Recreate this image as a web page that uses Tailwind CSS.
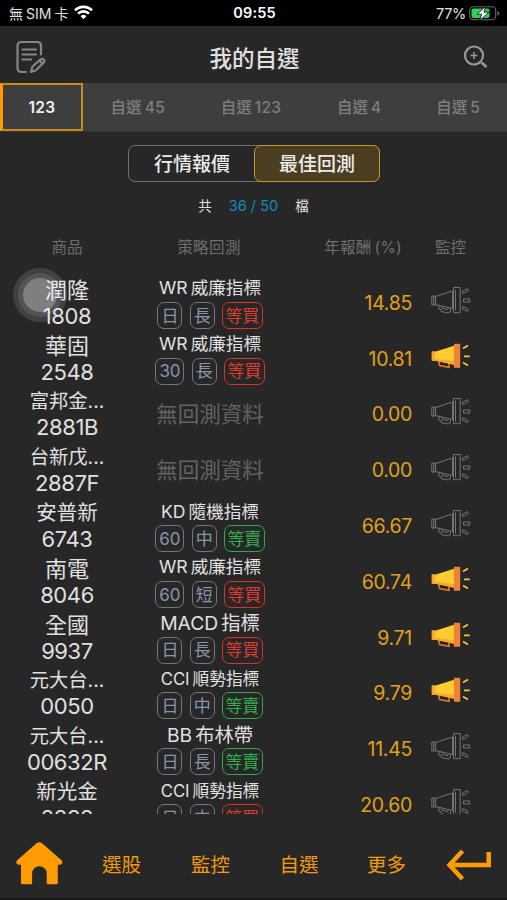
<!DOCTYPE html>
<html lang="zh-Hant">
<head>
    <meta charset="UTF-8">
    <meta name="viewport" content="width=device-width, initial-scale=1.0">
    <title>我的自選</title>
    <script src="https://cdn.jsdelivr.net/npm/@tailwindcss/browser@4"></script>
</head>
<body class="bg-[#272727] text-[#e0e0e0] font-['Inter','Noto_Sans_CJK_TC',sans-serif]">
    <div class="relative flex flex-col w-[507px] h-[900px] overflow-hidden border-b-2 border-[#1a1a1a]">

        <!-- Status bar -->
        <div class="grid grid-cols-3 items-center h-[26px] shrink-0 bg-black pl-[9px] pr-[7px] pt-px text-[14px] leading-none">
            <div class="flex items-center gap-[6px]">
                <span class="whitespace-nowrap">無<span class="mx-[3px]">SIM</span>卡</span>
                <svg class="w-[19px] h-[15px] -mt-0.5" viewBox="0 0 19 15" fill="none" stroke="#fff" stroke-width="2.6">
                    <path d="M1 5.4a12 12 0 0 1 17 0M4 8.6a7.8 7.8 0 0 1 11 0"/>
                    <path d="M9.500 14.300l-2.900-3a4.100 4.100 0 0 1 5.800 0z" fill="#fff" stroke="none"/>
                </svg>
            </div>
            <div class="text-center font-semibold text-[14.500px] text-white tracking-[0.2px]">09:55</div>
            <div class="flex items-center justify-end gap-[3px]">
                <span class="text-[14.500px] tracking-[-0.3px] pt-px">77%</span>
                <svg class="w-[31px] h-[15px]" viewBox="0 0 31 15">
                    <rect x=".7" y=".8" width="26" height="13" rx="3.800" fill="none" stroke="#6b6b6b" stroke-width="1.100"/>
                    <rect x="2.500" y="2.600" width="18" height="9.400" rx="2" fill="#2fd158"/>
                    <path d="M28.500 5v4.600q1.700-.7 1.700-2.300T28.500 5z" fill="#777"/>
                    <path d="M16.800.3L8 8.200h4.600L10.500 14.700l9.500-8.500H15z" fill="#fff" stroke="#000" stroke-width=".8"/>
                </svg>
            </div>
        </div>

        <!-- Header -->
        <div class="flex items-center justify-between h-[57px] shrink-0 pl-[16px] pr-[19px]">
            <svg class="w-[30px] h-[34px] mt-1" viewBox="0 0 30 34" fill="none" stroke="#858585" stroke-width="2.200" stroke-linecap="round">
                <path d="M10 32H5.500Q1.500 32 1.500 28V6Q1.500 2 5.500 2H21q4 0 4 4v8.500"/>
                <path d="M6.500 9.500H20M6.500 14.500H20M6.500 19.500H15"/>
                <path d="M15 32l1.500-5.500 8.300-7.300q1.500-.9 2.800.4t.3 2.700L20 30.300zM23.500 20.500l3.300 3.300" stroke-linejoin="round"/>
            </svg>
            <h1 class="text-[22.500px] font-medium mt-[9px]">我的自選</h1>
            <svg class="w-[25px] h-[23px] mt-1" viewBox="0 0 25 23" fill="none" stroke="#999">
                <circle cx="11" cy="10.500" r="9" stroke-width="2.200"/>
                <path d="M11 7v7M7.500 10.500h7" stroke-width="1.500"/>
                <path d="M18.500 17.500l5 4.500" stroke-width="2.600"/>
            </svg>
        </div>

        <!-- Group tabs -->
        <div class="flex h-[49px] shrink-0 bg-[#3e3e3e] border-b border-[#333] text-[15.500px] font-medium text-[#7d7d7d] *:flex *:items-center *:justify-center *:gap-[3px] *:pt-0.5">
            <div class="w-[83px] border-2 border-l-[3px] border-[#c98a1b] border-l-[#ff9a00] text-[#f0f0f0] font-semibold tracking-[0.3px]">123</div>
            <div class="w-[110px]"><span>自選</span><span class="tracking-[0.5px]">45</span></div>
            <div class="w-[116px]"><span>自選</span><span class="tracking-[0.3px]">123</span></div>
            <div class="w-[100px]"><span>自選</span><span>4</span></div>
            <div class="w-[98px]"><span>自選</span><span>5</span></div>
        </div>

        <!-- Mode switch -->
        <div class="flex shrink-0 w-[252px] h-[37px] mt-[13px] ml-[128px] text-[19px] font-medium text-[#ececec] rounded-[7px] border border-[#707070]">
            <div class="flex-1 flex items-center justify-center pt-[3px]">行情報價</div>
            <div class="w-[126px] -m-px flex items-center justify-center pt-[3px] rounded-[7px] border-[1.500px] border-[#c3962e] bg-[#4b3e20]">最佳回測</div>
        </div>

        <div class="flex items-center justify-center h-5 shrink-0 mt-[14px] gap-[17px] text-[13.500px]">
            <span>共</span><span class="text-[14.500px] text-[#128bc0]">36 / 50</span><span>檔</span>
        </div>

        <!-- Column titles -->
        <div class="flex items-center h-6 shrink-0 mt-5 text-[15.500px] text-[#6e6e6e]">
            <div class="w-[134px] text-center">商品</div>
            <div class="w-[150px] text-center tracking-[0.4px]">策略回測</div>
            <div class="w-[118px] text-right tracking-[0.3px]">年報酬<span class="ml-[3px]">(%)</span></div>
            <div class="w-[97px] text-center">監控</div>
        </div>

        <!-- Stock list -->
        <div id="list" class="h-[540px] shrink-0 mt-[14px] overflow-hidden"></div>

        <!-- Bottom navigation -->
        <div class="flex items-center flex-1 pt-[14px] text-[19.500px] text-[#f29a0c]">
            <svg class="w-[47px] h-[43px] ml-[16px]" viewBox="0 0 47 43" fill="#ff9c05">
                <path d="M20.500 1.200q2.800-2 5.600 0L45.800 18.500q1.700 3.700-1.800 4.300h-2.200V41q0 1.300-1.300 1.300H32q-1.300 0-1.300-1.300V31.500a7.300 7.300 0 0 0-14.600 0V41q0 1.300-1.300 1.300H6.300Q5 42.300 5 41V22.800H2.600Q-.9 22 .9 18.500z"/>
            </svg>
            <div class="w-[89px] ml-[14px] pt-1.5 text-center">選股</div>
            <div class="w-[89px] pt-1.5 text-center">監控</div>
            <div class="w-[88px] pt-1.5 text-center">自選</div>
            <div class="w-[87px] pt-1.5 text-center">更多</div>
            <svg class="w-[46px] h-[32px] ml-[16px] mt-1" viewBox="0 0 46 32" fill="none" stroke="#ff9c05" stroke-width="4.500">
                <path d="M16.500 2L3.500 16l13 14M4 16h38.700V3"/>
            </svg>
        </div>

        <!-- Floating touch button -->
        <div class="absolute left-[13px] top-[268px] size-[54px] rounded-full bg-white/12 flex items-center justify-center">
            <div class="size-[44px] rounded-full bg-white/10 flex items-center justify-center">
                <div class="size-[34px] rounded-full bg-white/25"></div>
            </div>
        </div>
    </div>

    <script>
        const BIG = 'text-[22px]', MID = 'text-[20.500px]', SMALL = 'text-[19.300px]';
        const S1 = 'text-[16.700px]', S2 = 'text-[17.600px]', S3 = 'text-[19.300px]';

        // name, size, code, [latin, chinese, size], [period, term, signal], rate, alert on
        const stocks = [
            ['潤隆', BIG, '1808', ['WR', '威廉指標', S2], ['日', '長', '等買'], '14.85', false],
            ['華固', BIG, '2548', ['WR', '威廉指標', S2], ['30', '長', '等買'], '10.81', true],
            ['富邦金...', SMALL, '2881B', null, null, '0.00', false],
            ['台新戊...', SMALL, '2887F', null, null, '0.00', false],
            ['安普新', MID, '6743', ['KD', '隨機指標', S2], ['60', '中', '等賣'], '66.67', false],
            ['南電', BIG, '8046', ['WR', '威廉指標', S2], ['60', '短', '等買'], '60.74', true],
            ['全國', BIG, '9937', ['MACD', '指標', S3], ['日', '長', '等買'], '9.71', true],
            ['元大台...', SMALL, '0050', ['CCI', '順勢指標', S1], ['日', '中', '等賣'], '9.79', true],
            ['元大台...', SMALL, '00632R', ['BB', '布林帶', S3], ['日', '長', '等賣'], '11.45', false],
            ['新光金', MID, '2888', ['CCI', '順勢指標', S1], ['日', '中', '等買'], '20.60', false]
        ];

        const hornOff = `
            <svg class="w-[40px] h-[28px]" viewBox="0 0 40 28" fill="none" stroke="#747474" stroke-width="1">
                <path d="M.8 10h3.700v9H.8zM4.500 10.500L21.500 5v17.500L4.500 18.500zM2.700 10v9"/>
                <path d="M22.500 1.500h6.700v25.200h-6.700zM24.500 3.500v21"/>
                <path d="M7.500 19.300l.7 4 2 .3v2l7 1.400 2-1 .3-3.500M10.500 20l.6 2.300 5.500 1.300.7-1.800"/>
                <path d="M31 5.700l5.300-3.200 1 2-5.300 3.200zM32.500 13h6v3h-6zM32 20.500l5.300 3-1 2-5.300-3z"/>
            </svg>`;
        const hornOn = `
            <svg class="w-[40px] h-[28px]" viewBox="0 0 40 28">
                <path d="M7.500 18.500l1 5 9.500 1.800V21" fill="none" stroke="#e07828" stroke-width="1.600"/>
                <path d="M.8 9.500h4L23 3.800v18.900l-18.200-4h-4z" fill="#fccb2f"/>
                <path d="M4.800 17L23 19v3.700l-18.200-4z" fill="#f6a82b"/>
                <path d="M.8 9.500h3.200v9.200H.8z" fill="#f9a633"/>
                <path d="M23 1.800h6.200v24H23z" fill="#ee8338"/>
                <path d="M32 6.500l5-3M33 14.300h5.800M32 20.500l5 3" stroke="#fbc34a" stroke-width="1.700"/>
            </svg>`;

        function tag(text) {
            return `<span class="h-[27px] px-[3px] pt-0.5 flex items-center rounded-[7px] border border-[#73777b] text-[#8795ab]">${text}</span>`;
        }

        function signal(text) {
            const color = text === '等買' ? 'border-[#d5352b] text-[#e03a2f]' : 'border-[#2fa84a] text-[#31b14e]';
            return `<span class="h-[27px] px-[2.500px] pt-0.5 flex items-center rounded-[7px] border-[1.500px] ${color}">${text}</span>`;
        }

        document.getElementById('list').innerHTML = stocks.map(([name, size, code, strategy, tags, rate, on]) => `
            <div class="flex items-center h-[55.800px]">
                <div class="w-[134px] flex flex-col items-center">
                    <div class="h-[28px] leading-[30px] ${size}">${name}</div>
                    <div class="h-[26px] leading-[26px] text-[22px] tracking-[-0.4px]">${code}</div>
                </div>
                <div class="w-[152px] flex flex-col items-center">
                    ${strategy ? `
                    <div class="flex items-center gap-[3px] h-[27px] leading-[26px] ${strategy[2]}"><span>${strategy[0]}</span><span>${strategy[1]}</span></div>
                    <div class="flex gap-[7.500px] text-[17px] tracking-[-0.2px]">${tag(tags[0])}${tag(tags[1])}${signal(tags[2])}</div>
                    ` : '<div class="text-[21.500px] text-[#636363] pt-0.5">無回測資料</div>'}
                </div>
                <div class="w-[126px] pt-[3px] text-right text-[19.500px] text-[#e0a11b] tracking-[-0.3px]">${rate}</div>
                <div class="ml-[19px] -mt-1">${on ? hornOn : hornOff}</div>
            </div>`).join('');
    </script>
</body>
</html>
